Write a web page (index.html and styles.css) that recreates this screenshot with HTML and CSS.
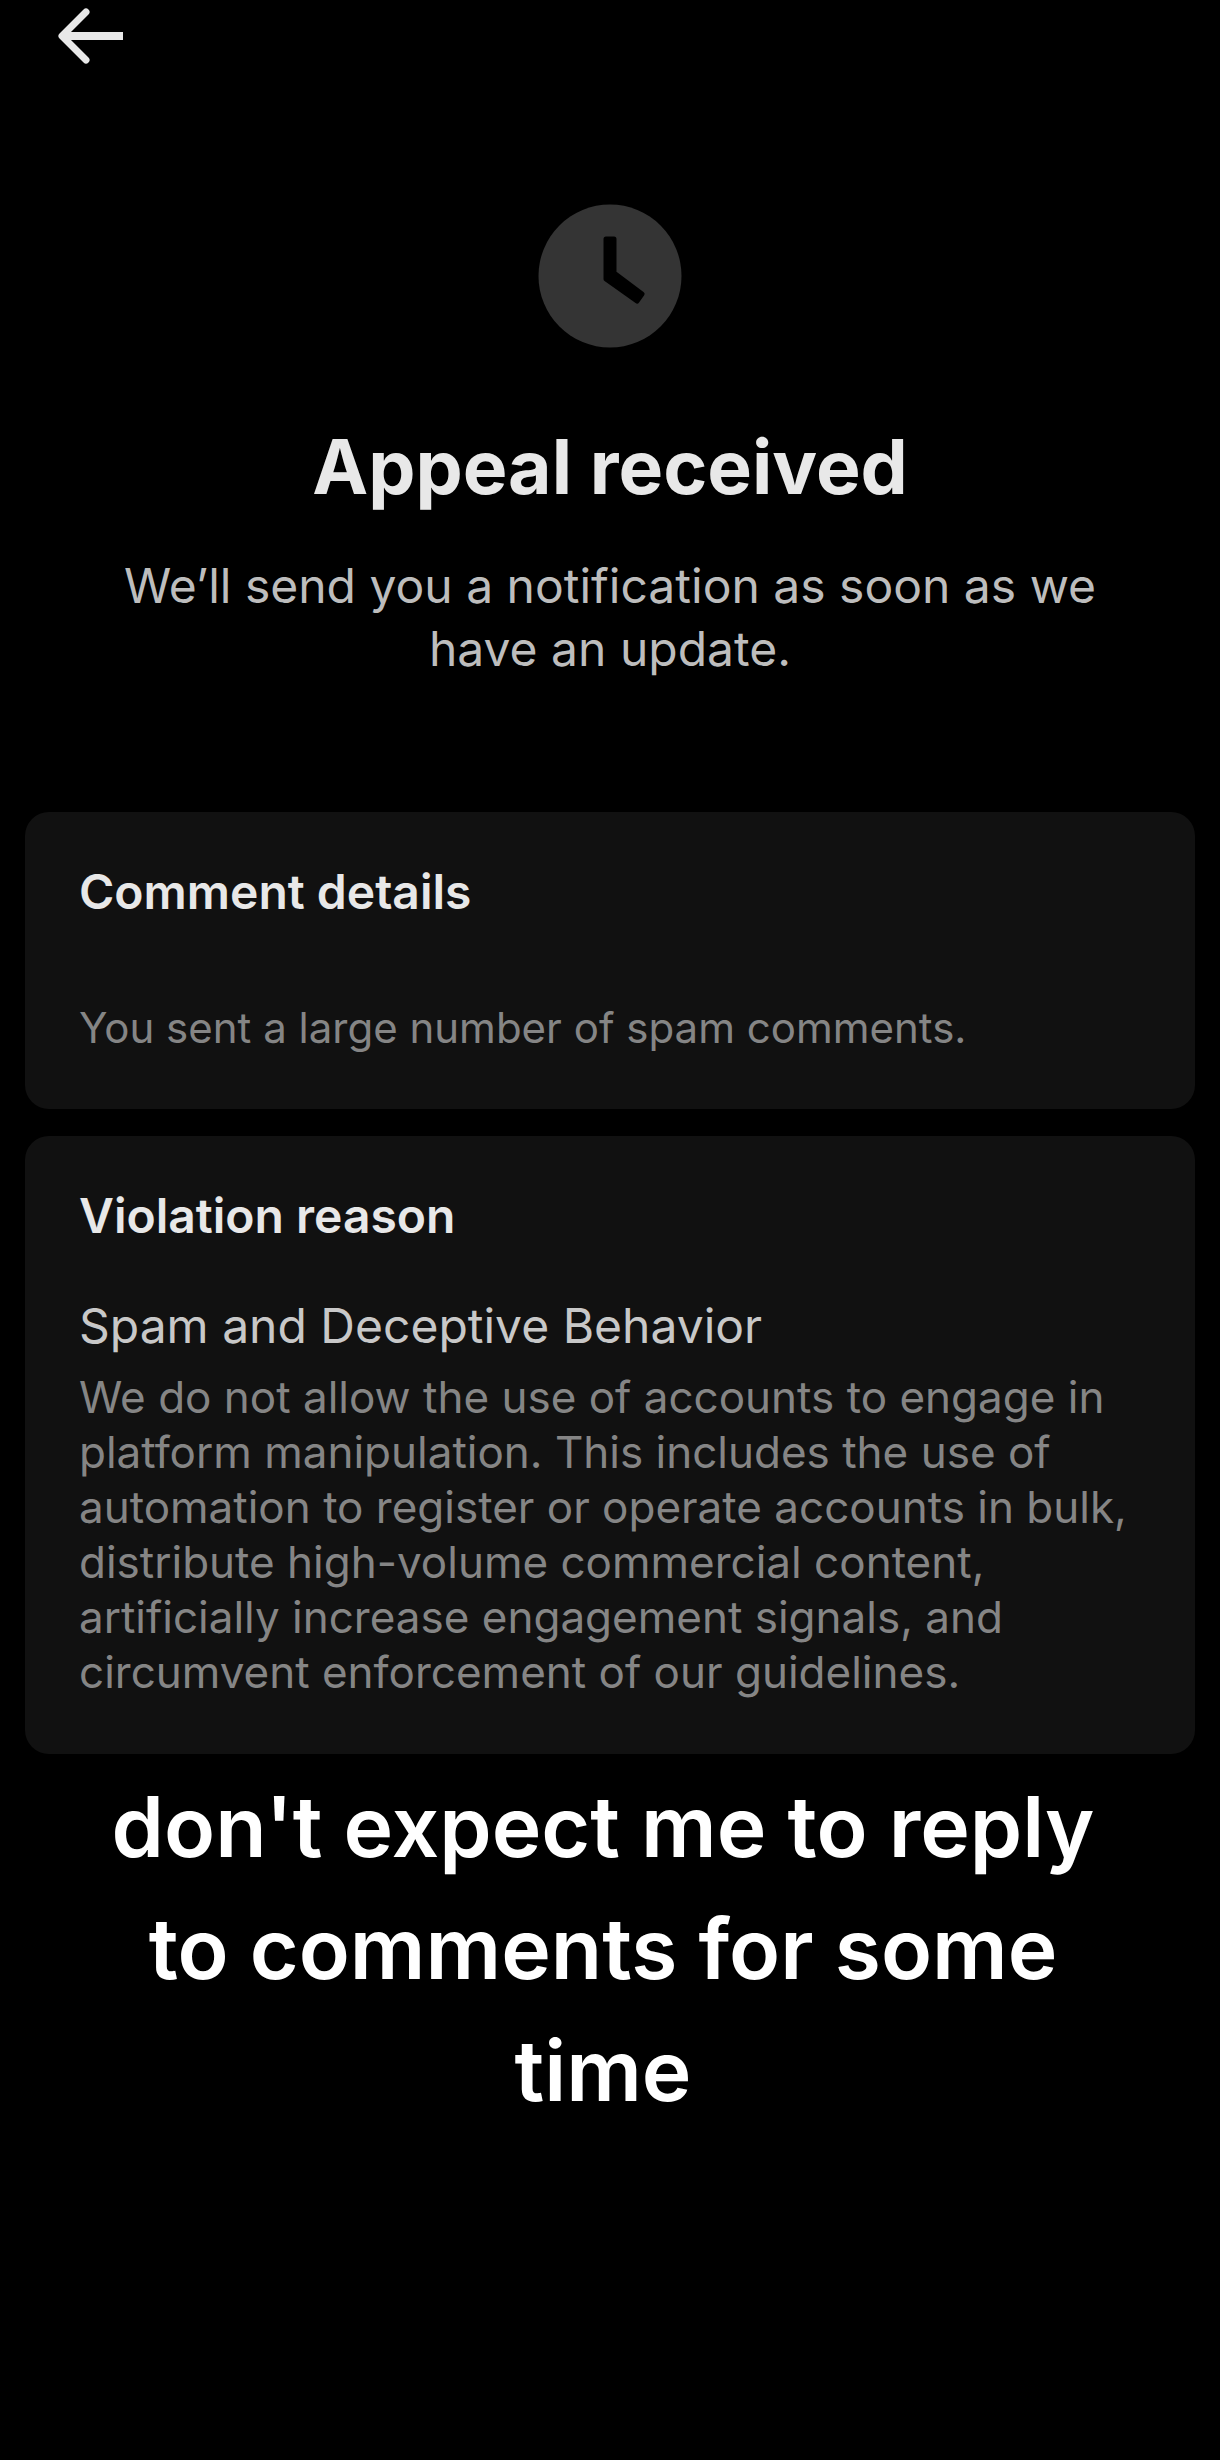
FILE: index.html
```html
<!DOCTYPE html>
<html lang="en">
<head>
  <meta charset="UTF-8">
  <meta name="viewport" content="width=device-width, initial-scale=1">
  <title>Appeal received</title>
  <link rel="stylesheet" href="styles.css">
</head>
<body>

  <!-- Top bar -->
  <header class="topbar">
    <button class="back" type="button" aria-label="Back">
      <svg width="68" height="60" viewBox="0 0 68 60" fill="none" stroke="currentColor">
        <path d="M30 6 6 30l24 24" stroke-width="7" stroke-linecap="round" stroke-linejoin="round"/>
        <path d="M8 30h59" stroke-width="8"/>
      </svg>
    </button>
  </header>

  <main class="page">
    <!-- Appeal status -->
    <section class="status">
      <svg class="clock" width="144" height="144" viewBox="0 0 144 144">
        <circle cx="72" cy="72" r="71.5" fill="#343434"/>
        <path d="M68 35h8v34l28 21-5 7-31-22z" fill="#000" stroke="#000" stroke-width="5" stroke-linejoin="round"/>
      </svg>
      <h1>Appeal received</h1>
      <p>We’ll send you a notification as soon as we have an update.</p>
    </section>

    <!-- Details -->
    <div class="cards">
      <section class="card">
        <h2>Comment details</h2>
        <p class="comment">You sent a large number of spam comments.</p>
      </section>

      <section class="card">
        <h2>Violation reason</h2>
        <h3>Spam and Deceptive Behavior</h3>
        <p class="policy">We do not allow the use of accounts to engage in platform manipulation. This includes the use of automation to register or operate accounts in bulk, distribute high-volume commercial content, artificially increase engagement signals, and circumvent enforcement of our guidelines.</p>
      </section>
    </div>

    <!-- Caption -->
    <p class="caption">don't expect me to reply to comments for some time</p>
  </main>

</body>
</html>
```
FILE: styles.css
```css
* {
  box-sizing: border-box;
}

body {
  margin: 0;
  min-height: 100vh;
  background-color: #000;
  color: #e8e8e8;
  font-family: Inter, "Liberation Sans", sans-serif;
}

h1, h2, h3, p {
  margin: 0;
}

/* Top bar */
.topbar {
  height: 72px;
  padding: 6px 56px;
}

.back {
  display: block;
  padding: 0;
  border: 0;
  background: none;
  color: #e8e8e8;
  cursor: pointer;
}

.back svg,
.clock {
  display: block;
}

.page {
  padding: 132px 25px 0;
}

/* Appeal status */
.status {
  display: flex;
  flex-direction: column;
  align-items: center;
  padding: 0 80px;
  text-align: center;
}

.status h1 {
  margin-top: 74px;
  font-size: 75px;
  font-weight: 700;
  line-height: 90px;
}

.status p {
  margin-top: 42px;
  color: #bdbdbd;
  font-size: 48px;
  line-height: 63px;
}

/* Cards */
.cards {
  display: flex;
  flex-direction: column;
  gap: 27px;
  margin-top: 132px;
}

.card {
  padding: 52px 54px 54px;
  border-radius: 24px;
  background-color: #111;
}

.card h2 {
  font-size: 48px;
  font-weight: 600;
  line-height: 56px;
}

.card h3 {
  margin: 52px 0 14px;
  color: #c8c8c8;
  font-size: 48px;
  font-weight: 400;
  line-height: 60px;
}

.card p {
  color: #858585;
  line-height: 55px;
}

.card .comment {
  margin-top: 80px;
  font-size: 42px;
}

.card .policy {
  font-size: 44px;
}

/* Caption */
.caption {
  margin-top: 12px;
  padding: 0 86px 0 72px;
  color: #fff;
  font-size: 84px;
  font-weight: 600;
  line-height: 122px;
  text-align: center;
}
```
